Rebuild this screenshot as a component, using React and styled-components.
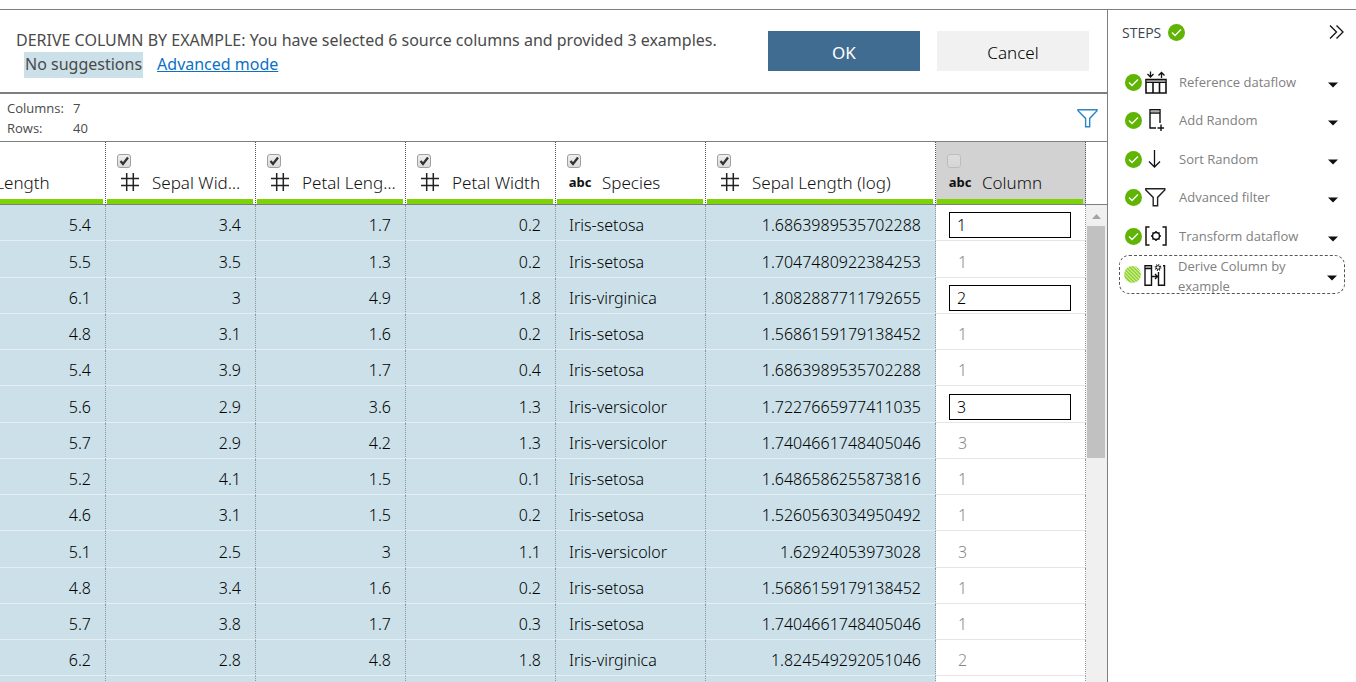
import React from "react";
import styled, { createGlobalStyle, css } from "styled-components";

const FONT = '"Noto Sans", "Open Sans", sans-serif';
const LINE = "#7f7f7f";
const BLUE = "#cbe0e8";
const GREEN = "#7ed307";

const Global = createGlobalStyle`
  *, *::before, *::after { box-sizing: border-box; }
  body { margin: 0; background: #fff; font-family: ${FONT}; color: #4a4a4a; overflow: hidden; }
  button, input { font-family: inherit; }
`;

const Page = styled.div`
  height: 100vh;
  padding-top: 9px;
  display: flex;
`;

const Main = styled.main`
  flex: 1;
  min-width: 0;
  display: flex;
  flex-direction: column;
  border-top: 1px solid ${LINE};
`;

const CommandBar = styled.section`
  display: flex;
  justify-content: space-between;
  align-items: flex-start;
  padding: 18px 18px 14px 16px;
  border-bottom: 2px solid ${LINE};
`;

const Message = styled.p`
  margin: 0;
  font-size: 16px;
  line-height: 24px;
  white-space: nowrap;
`;

const Suggestion = styled.div`
  display: flex;
  gap: 14px;
  margin-left: 8px;
`;

const Tag = styled.span`
  padding: 0 1px;
  height: 26px;
  background: ${BLUE};
`;

const Link = styled.a`
  color: #0b70c8;
`;

const Actions = styled.div`
  display: flex;
  gap: 17px;
  padding-top: 3px;
`;

const ActionButton = styled.button`
  width: 152px;
  height: 40px;
  border: 0;
  padding: 2px 0 0;
  font-size: 17px;
  font-weight: ${(p) => (p.$primary ? 400 : 300)};
  color: ${(p) => (p.$primary ? "#fff" : "#000")};
  background: ${(p) => (p.$primary ? "#416c91" : "#f1f1f1")};
`;

const InfoBar = styled.section`
  display: flex;
  justify-content: space-between;
  align-items: center;
  padding: 4px 9px 3px 7px;
  border-bottom: 1px solid ${LINE};
`;

const Counts = styled.dl`
  display: grid;
  grid-template-columns: 66px auto;
  margin: 0;
  font-family: "Open Sans", sans-serif;
  font-size: 13px;
  line-height: 20px;
  dd { margin: 0; }
`;

const IconButton = styled.button`
  display: flex;
  border: 0;
  padding: 0;
  background: none;
  color: inherit;
`;

const GridArea = styled.div`
  flex: 1;
  min-height: 0;
  display: flex;
  overflow: hidden;
`;

const TableView = styled.div`
  flex: 1;
  min-width: 0;
  overflow: hidden;
`;

const Table = styled.table`
  width: calc(100% + 97px);
  margin-left: -97px;
  table-layout: fixed;
  border-spacing: 0;
  font-size: 16px;
  font-weight: 300;
`;

const Col = styled.col`
  width: ${(p) => (p.$width ? `${p.$width}px` : "auto")};
`;

const HeadCell = styled.th`
  height: 63px;
  padding: 0 2px 0 1px;
  text-align: left;
  font-size: 17px;
  font-weight: 300;
  color: #111;
  border-right: 1px dotted #555;
  border-bottom: 1px solid ${LINE};
  background: ${(p) => (p.$derived ? "#d2d2d2" : "#fff")};
`;

const HeadInner = styled.div`
  height: 62px;
  padding: 12px 7px 0 10px;
  border-bottom: 5px solid ${GREEN};
`;

const HeadLabel = styled.label`
  display: flex;
  align-items: center;
  height: 28px;
  gap: 9px;
`;

const HeadName = styled.span`
  overflow: hidden;
  text-overflow: ellipsis;
  white-space: nowrap;
`;

const TypeMark = styled.span`
  flex: none;
  width: 26px;
  display: flex;
  justify-content: center;
  font-size: 13px;
  line-height: 18px;
  font-weight: 700;
  color: #111;
`;

const Check = styled.span`
  display: grid;
  width: 14px;
  height: 14px;
  opacity: ${(p) => (p.$off ? 0.4 : 1)};
  > * { grid-area: 1 / 1; }
  input {
    appearance: none;
    margin: 0;
    border: 1px solid #a0a0a0;
    border-radius: 3px;
    background: linear-gradient(#efefef, #dcdcdc);
  }
  svg { pointer-events: none; }
`;

const BodyRow = styled.tr`
  height: 36px;
  &:nth-child(4n + 2) { height: 37px; }
`;

const Cell = styled.td`
  padding: 5px 14px 0 13px;
  line-height: 20px;
  white-space: nowrap;
  overflow: hidden;
  color: #000;
  text-align: ${(p) => (p.$text ? "left" : "right")};
  background: ${BLUE};
  border-right: 1px dotted #8a979c;
  border-bottom: 1px solid #e3eff3;
  ${(p) => p.$derived && css`
    background: #fff;
    color: #888;
    border-bottom-color: #e6e6e6;
    padding-left: ${p.$edit ? "13px" : "22px"};
  `}
`;

const ExampleInput = styled.input`
  display: block;
  width: 100%;
  height: 26px;
  padding: 0 7px;
  border: 1px solid #000;
  font-size: 16px;
  font-weight: 300;
  color: #000;
`;

const Gutter = styled.div`
  width: 21px;
  display: flex;
  flex-direction: column;
`;

const GutterHead = styled.div`
  height: 63px;
  border-bottom: 1px solid ${LINE};
`;

const ScrollTrack = styled.div`
  flex: 1;
  padding: 0 2px 0 1px;
  background: #f0f0f0;
`;

const ScrollArrow = styled.button`
  display: flex;
  align-items: center;
  justify-content: center;
  width: 100%;
  height: 21px;
  border: 0;
  padding: 2px 0 0;
  background: none;
`;

const ScrollThumb = styled.div`
  height: 232px;
  background: #c1c1c1;
`;

const Side = styled.aside`
  width: 249px;
  border-top: 1px solid ${LINE};
  border-left: 1px solid ${LINE};
  padding: 12px 11px 0 11px;
  font-family: "Open Sans", sans-serif;
`;

const SideHead = styled.header`
  display: flex;
  align-items: center;
  justify-content: space-between;
  height: 20px;
  padding: 0 1px 0 3px;
`;

const SideTitle = styled.h2`
  display: flex;
  align-items: center;
  gap: 7px;
  margin: 0;
  font-size: 14px;
  font-weight: 400;
  color: #3c444c;
`;

const StepList = styled.ol`
  list-style: none;
  margin: 21px 0 0;
  padding: 0;
`;

const Step = styled.li`
  display: flex;
  align-items: center;
  height: 38px;
  padding: 0 7px 0 6px;
  &:nth-child(even) { margin-bottom: 1px; }
  ${(p) => p.$current && css`
    height: 39px;
    padding: 0 7px 0 4px;
    border: 1px dashed #555;
    border-radius: 10px;
  `}
`;

const StepIcon = styled.span`
  display: flex;
  justify-content: center;
  width: 24px;
  margin: 0 11px 0 2px;
`;

const StepName = styled.span`
  flex: 1;
  height: ${(p) => (p.$current ? "37px" : "20px")};
  overflow: hidden;
  font-size: 13px;
  line-height: 20px;
  color: #808080;
`;

const MenuButton = styled(IconButton)`
  padding-top: 6px;
`;

const Tick = () => (
  <svg width="17" height="17" viewBox="0 0 17 17" aria-hidden="true">
    <circle cx="8.5" cy="8.5" r="8.5" fill="#5fb404" />
    <path d="M4 8.500l3 3 6-6" fill="none" stroke="#fff" strokeWidth="1.3" />
  </svg>
);

const Pending = () => (
  <svg width="17" height="17" viewBox="0 0 17 17" aria-hidden="true">
    <defs>
      <pattern id="hatch" width="2.5" height="2.5" patternUnits="userSpaceOnUse" patternTransform="rotate(-45)">
        <rect width="2.5" height="2.5" fill="#d9f3a4" />
        <rect width="1.4" height="2.5" fill="#86cf24" />
      </pattern>
    </defs>
    <circle cx="8.5" cy="8.5" r="8.5" fill="url(#hatch)" />
  </svg>
);

const Funnel = ({ color }) => (
  <svg width="21" height="19" viewBox="0 0 21 19" fill="none" stroke={color} strokeWidth="1.4" aria-hidden="true">
    <path d="M1 .8h19v1l-7.3 7.6v8.4H8.600V9.400L1 1.800z" />
  </svg>
);

const Hash = () => (
  <svg width="18" height="18" viewBox="0 0 18 18" stroke="#222" strokeWidth="1.5" aria-hidden="true">
    <path d="M5.700 0v18M12.300 0v18M0 5.500h18M0 12.500h18" />
  </svg>
);

const Caret = () => (
  <svg width="10" height="6" viewBox="0 0 10 6" aria-hidden="true">
    <path d="M0 .5h10L5 5.500z" fill="#111" />
  </svg>
);

const ICONS = {
  reference: (
    <svg width="22" height="23" viewBox="0 0 22 23" fill="none" stroke="#111" strokeWidth="1.6">
      <path d="M1 8.500h20v13.500H1zM8 11v11M14.500 11v11" />
      <path d="M1.500 10h19" stroke="#777" strokeWidth="1.500" />
      <path d="M1 11.500h20" strokeWidth="1" />
      <path d="M5.500 .5v5.500M2.500 3l3 3 3-3M16.500 7V1.500M13.500 4.500l3-3 3 3" strokeWidth="1.300" />
    </svg>
  ),
  add: (
    <svg width="22" height="22" viewBox="0 0 22 22" fill="none" stroke="#111" strokeWidth="1.4">
      <path d="M11 19H5V.8h10V14M5 4h10M16 15.500v6.500M12.500 19H19" />
      <path d="M5.700 2.400h8.600" stroke="#aaa" strokeWidth="1.600" />
    </svg>
  ),
  sort: (
    <svg width="22" height="18" viewBox="0 0 22 18" fill="none" stroke="#111" strokeWidth="1.3">
      <path d="M9.500 0v17M4 11.500L9.500 17l5.500-5.500" />
    </svg>
  ),
  filter: (
    <svg width="22" height="19" viewBox="0 0 22 19" fill="none" stroke="#222" strokeWidth="1.4">
      <path d="M.8 .8h19v1.200l-7.200 7.400v8.400H8.200V9.400L.8 2z" />
    </svg>
  ),
  transform: (
    <svg width="22" height="20" viewBox="0 0 22 20" fill="none" stroke="#111" strokeWidth="1.5">
      <path d="M4.500 1H1v18h3.500M17.500 1H21v18h-3.500" />
      <circle cx="11" cy="10" r="3.500" />
      <path d="M11 5v1.500M11 13.500V15M6 10h1.500M14.500 10H16M7.500 6.500l1 1M13.500 12.500l1 1M14.500 6.500l-1 1M8.500 12.500l-1 1" />
    </svg>
  ),
  derive: (
    <svg width="22" height="22" viewBox="0 0 22 22" fill="none" stroke="#111" strokeWidth="1.4">
      <path d="M1 1.800h6.500v19.400H1zM1 4.500h6.500M19 1.800h1.500v19.400h-6V8M8 12.500h5.500M11 10l2.500 2.500L11 15" />
      <path d="M1.700 3.200h5" stroke="#999" />
      <circle cx="14" cy="3.500" r="1.800" strokeWidth="1" />
      <circle cx="14" cy="3.500" r="2.800" strokeWidth="1.200" strokeDasharray="1 1.199" />
    </svg>
  ),
};

const columns = [
  { name: "Sepal Length", width: 203, key: "sl" },
  { name: "Sepal Width (cm)", width: 150, key: "sw" },
  { name: "Petal Length (cm)", width: 150, key: "pl" },
  { name: "Petal Width", width: 150, key: "pw" },
  { name: "Species", width: 150, key: "species", text: true },
  { name: "Sepal Length (log)", key: "log" },
  { name: "Column", width: 150, key: "derived", text: true, derived: true },
];

const rows = [
  ["5.4", "3.4", "1.7", "0.2", "Iris-setosa", "1.6863989535702288", "1", true],
  ["5.5", "3.5", "1.3", "0.2", "Iris-setosa", "1.7047480922384253", "1"],
  ["6.1", "3", "4.9", "1.8", "Iris-virginica", "1.8082887711792655", "2", true],
  ["4.8", "3.1", "1.6", "0.2", "Iris-setosa", "1.5686159179138452", "1"],
  ["5.4", "3.9", "1.7", "0.4", "Iris-setosa", "1.6863989535702288", "1"],
  ["5.6", "2.9", "3.6", "1.3", "Iris-versicolor", "1.7227665977411035", "3", true],
  ["5.7", "2.9", "4.2", "1.3", "Iris-versicolor", "1.7404661748405046", "3"],
  ["5.2", "4.1", "1.5", "0.1", "Iris-setosa", "1.6486586255873816", "1"],
  ["4.6", "3.1", "1.5", "0.2", "Iris-setosa", "1.5260563034950492", "1"],
  ["5.1", "2.5", "3", "1.1", "Iris-versicolor", "1.62924053973028", "3"],
  ["4.8", "3.4", "1.6", "0.2", "Iris-setosa", "1.5686159179138452", "1"],
  ["5.7", "3.8", "1.7", "0.3", "Iris-setosa", "1.7404661748405046", "1"],
  ["6.2", "2.8", "4.8", "1.8", "Iris-virginica", "1.824549292051046", "2"],
  ["", "", "", "", "", "", ""],
];

const steps = [
  { icon: "reference", name: "Reference dataflow" },
  { icon: "add", name: "Add Random" },
  { icon: "sort", name: "Sort Random" },
  { icon: "filter", name: "Advanced filter" },
  { icon: "transform", name: "Transform dataflow" },
  { icon: "derive", name: "Derive Column by example", current: true },
];

export default function App() {
  return (
    <>
      <Global />
      <Page>
        <Main>
          <CommandBar>
            <div>
              <Message>
                DERIVE COLUMN BY EXAMPLE: You have selected 6 source columns and provided 3 examples.
              </Message>
              <Message as={Suggestion}>
                <Tag>No suggestions</Tag>
                <Link href="#advanced">Advanced mode</Link>
              </Message>
            </div>
            <Actions>
              <ActionButton $primary>OK</ActionButton>
              <ActionButton>Cancel</ActionButton>
            </Actions>
          </CommandBar>
          <InfoBar>
            <Counts>
              <dt>Columns:</dt>
              <dd>7</dd>
              <dt>Rows:</dt>
              <dd>40</dd>
            </Counts>
            <IconButton aria-label="Filter">
              <Funnel color="#2f86c6" />
            </IconButton>
          </InfoBar>
          <GridArea>
            <TableView>
              <Table>
                <colgroup>
                  {columns.map((c) => <Col key={c.key} $width={c.width} />)}
                </colgroup>
                <thead>
                  <tr>
                    {columns.map((c) => (
                      <HeadCell key={c.key} $derived={c.derived}>
                        <HeadInner>
                          <Check $off={c.derived}>
                            <input id={c.key} type="checkbox" defaultChecked={!c.derived} disabled={c.derived} />
                            {!c.derived && (
                              <svg width="14" height="14" viewBox="0 0 14 14" aria-hidden="true">
                                <path d="M3.500 7l2.500 3 5-6.500" fill="none" stroke="#333" strokeWidth="2.300" />
                              </svg>
                            )}
                          </Check>
                          <HeadLabel htmlFor={c.key}>
                            <TypeMark>{c.text ? "abc" : <Hash />}</TypeMark>
                            <HeadName>{c.name}</HeadName>
                          </HeadLabel>
                        </HeadInner>
                      </HeadCell>
                    ))}
                  </tr>
                </thead>
                <tbody>
                  {rows.map((r, i) => (
                    <BodyRow key={i}>
                      {columns.map((c, j) => (
                        <Cell key={c.key} $text={c.text} $derived={c.derived} $edit={c.derived && r[7]}>
                          {c.derived && r[7] ? (
                            <ExampleInput aria-label={`Example for row ${i + 1}`} defaultValue={r[j]} />
                          ) : (
                            r[j]
                          )}
                        </Cell>
                      ))}
                    </BodyRow>
                  ))}
                </tbody>
              </Table>
            </TableView>
            <Gutter>
              <GutterHead />
              <ScrollTrack>
                <ScrollArrow aria-label="Scroll up">
                  <svg width="9" height="5" viewBox="0 0 9 5" aria-hidden="true">
                    <path d="M0 5h9L4.500 0z" fill="#a3a3a3" />
                  </svg>
                </ScrollArrow>
                <ScrollThumb />
              </ScrollTrack>
            </Gutter>
          </GridArea>
        </Main>
        <Side>
          <SideHead>
            <SideTitle>
              STEPS <Tick />
            </SideTitle>
            <IconButton aria-label="Collapse steps">
              <svg width="15" height="14" viewBox="0 0 15 14" fill="none" stroke="#111" strokeWidth="1.3">
                <path d="M1 .5L7.500 7 1 13.500M7.500 .5L14 7l-6.500 6.500" />
              </svg>
            </IconButton>
          </SideHead>
          <StepList>
            {steps.map((s) => (
              <Step key={s.name} $current={s.current}>
                {s.current ? <Pending /> : <Tick />}
                <StepIcon>{ICONS[s.icon]}</StepIcon>
                <StepName $current={s.current}>{s.name}</StepName>
                <MenuButton aria-label={`${s.name} menu`}>
                  <Caret />
                </MenuButton>
              </Step>
            ))}
          </StepList>
        </Side>
      </Page>
    </>
  );
}
